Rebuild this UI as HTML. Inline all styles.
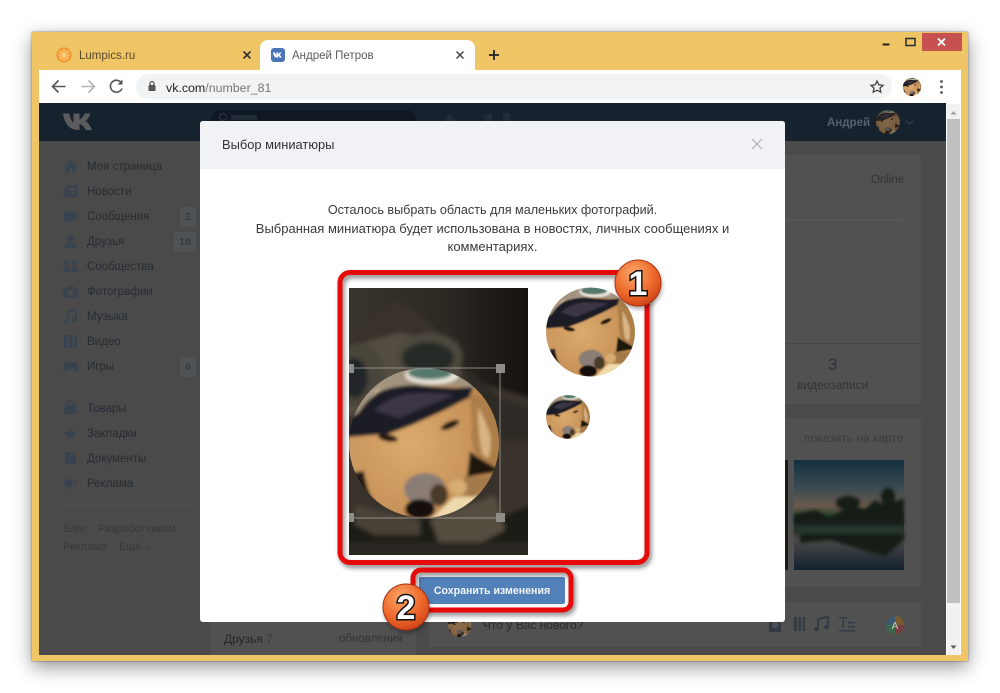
<!DOCTYPE html>
<html lang="ru"><head><meta charset="utf-8"><title>Выбор миниатюры</title>
<style>
html,body{margin:0;padding:0;width:1000px;height:693px;overflow:hidden;background:#fff}
body{font-family:"Liberation Sans","Noto Sans CJK SC",sans-serif;position:relative}
.a{position:absolute}
.t{position:absolute;white-space:nowrap;line-height:16px;transform:translateY(-7px)}
.s{font-size:11.5px;color:#272c33;left:87px}
.f{font-size:11px;color:#393939}
.b{position:absolute;background:#505356;color:#363b42;font-size:10.5px;font-weight:bold;text-align:center;height:20px;line-height:20px;border-radius:2px}
.m{font-size:13px;color:#3a3a3a;left:200px;width:585px;text-align:center}
svg{position:absolute;left:0;top:0}
</style></head><body>
<div class="a" style="left:32px;top:32px;width:936px;height:629px;background:#f0c566;box-shadow:0 6px 18px rgba(0,0,0,.42),0 0 2px rgba(0,0,0,.5)"></div>
<div class="a" style="left:922px;top:33px;width:40px;height:18px;background:#c75050"></div>
<div class="a" style="left:39px;top:70px;width:922px;height:585px;background:#fff"></div>
<div class="a" style="left:260px;top:40px;width:215px;height:31px;background:#fff;border-radius:8px 8px 0 0"></div>
<div class="a" style="left:136px;top:74px;width:756px;height:25px;background:#f1f3f4;border-radius:13px"></div>
<div class="a" style="left:39px;top:103px;width:907px;height:552px;background:#4a4a4a"></div>
<div class="a" style="left:39px;top:103px;width:907px;height:38px;background:#17222f"></div>
<div class="a" style="left:211px;top:110px;width:205px;height:30px;background:#0f1823;border-radius:10px"></div>
<div class="a" style="left:947px;top:104px;width:13px;height:551px;background:#f1f1f1"></div>
<div class="a" style="left:947px;top:119px;width:13px;height:484px;background:#c0c0c0"></div>
<div class="a" style="left:429px;top:155px;width:492px;height:249px;background:#515151;border-radius:2px"></div>
<div class="a" style="left:429px;top:220px;width:474px;height:1px;background:#5a5a5a"></div>
<div class="a" style="left:429px;top:343px;width:492px;height:1px;background:#484848"></div>
<div class="a" style="left:429px;top:418px;width:492px;height:169px;background:#515151;border-radius:2px"></div>
<div class="a" style="left:429px;top:602px;width:492px;height:45px;background:#515151;border-radius:2px"></div>
<div class="a" style="left:211px;top:600px;width:205px;height:55px;background:#515151"></div>
<div class="a" style="left:63px;top:505px;width:133px;height:1px;background:#505050"></div>
<div class="b" style="left:180px;top:207px;width:16px">2</div>
<div class="b" style="left:174px;top:232px;width:22px">18</div>
<div class="b" style="left:180px;top:357px;width:16px">6</div>

<div class="t" style="left:79px;top:55px;font-size:11.5px;color:#5a4a2a">Lumpics.ru</div>
<div class="t" style="left:292px;top:55px;font-size:11.5px;color:#5a5a5a">Андрей Петров</div>
<div class="t" style="left:166px;top:87px;font-size:12.4px;color:#202124">vk.com<span style="color:#777">/number_81</span></div>
<div class="t" style="left:827px;top:122px;font-size:11.5px;font-weight:bold;color:#56606c">Андрей</div>

<div class="t s" style="top:166px">Моя страница</div>
<div class="t s" style="top:191px">Новости</div>
<div class="t s" style="top:216px">Сообщения</div>
<div class="t s" style="top:241px">Друзья</div>
<div class="t s" style="top:266px">Сообщества</div>
<div class="t s" style="top:291px">Фотографии</div>
<div class="t s" style="top:316px">Музыка</div>
<div class="t s" style="top:341px">Видео</div>
<div class="t s" style="top:366px">Игры</div>
<div class="t s" style="top:408px">Товары</div>
<div class="t s" style="top:433px">Закладки</div>
<div class="t s" style="top:458px">Документы</div>
<div class="t s" style="top:483px">Реклама</div>
<div class="t f" style="left:63px;top:528px">Блог</div>
<div class="t f" style="left:98px;top:528px">Разработчикам</div>
<div class="t f" style="left:63px;top:546px">Реклама</div>
<div class="t f" style="left:119px;top:546px">Ещё</div>

<div class="t" style="left:871px;top:179px;font-size:11.5px;color:#333">Online</div>
<div class="t" style="left:828px;top:364px;font-size:17px;color:#2e3238">3</div>
<div class="t" style="left:797px;top:384px;font-size:12px;color:#333">видеозаписи</div>
<div class="t" style="left:804px;top:437px;font-size:12px;color:#3b3b3b">показать на карте</div>
<div class="t" style="left:224px;top:638px;font-size:12px;color:#262626">Друзья <span style="color:#3d3d3d">7</span></div>
<div class="t" style="left:339px;top:638px;font-size:11.5px;color:#333">обновления</div>

<svg width="1000" height="693" viewBox="0 0 1000 693" style="z-index:1">
<defs>
<filter id="bl" x="-10%" y="-10%" width="120%" height="120%"><feGaussianBlur stdDeviation="1.500"/></filter>
<filter id="bb" x="-10%" y="-10%" width="120%" height="120%"><feGaussianBlur stdDeviation="2.500"/></filter>
<filter id="sh" x="-20%" y="-20%" width="140%" height="140%"><feGaussianBlur stdDeviation="2.500"/></filter>
<clipPath id="c"><circle r="75"/></clipPath>
<clipPath id="pc"><rect x="349" y="288" width="179" height="267"/></clipPath>
<radialGradient id="orb" cx=".4" cy=".3" r=".8"><stop offset="0" stop-color="#f9a86a"/><stop offset=".55" stop-color="#ee6a2c"/><stop offset="1" stop-color="#c93a12"/></radialGradient>
<radialGradient id="fur" cx=".42" cy=".5" r=".6"><stop offset="0" stop-color="#dcaa6e"/><stop offset=".6" stop-color="#c8945a"/><stop offset="1" stop-color="#a87642"/></radialGradient>
<linearGradient id="land" x1="0" y1="0" x2="0" y2="1"><stop offset="0" stop-color="#12303f"/><stop offset=".25" stop-color="#3a4a52"/><stop offset=".42" stop-color="#6a5a4e"/><stop offset=".52" stop-color="#1d3a22"/><stop offset=".62" stop-color="#222e28"/><stop offset=".72" stop-color="#4d4a48"/><stop offset="1" stop-color="#12202e"/></linearGradient>
<linearGradient id="ph" x1="0" y1="0" x2="1" y2="0"><stop offset="0" stop-color="#39352c"/><stop offset=".55" stop-color="#2c2923"/><stop offset="1" stop-color="#14120f"/></linearGradient>
<g id="dog"><g clip-path="url(#c)"><g filter="url(#bl)">
<rect x="-90" y="-90" width="180" height="180" fill="url(#fur)"/>
<path d="M-90-90H90V-48L48-56-9-58-46-51-66-30-90-18Z" fill="#a39480"/>
<path d="M-62-32Q-55-45-46-54L-38-50Q-50-42-56-28Z" fill="#dcc9a4"/>
<ellipse cx="8" cy="-68" rx="27" ry="9.500" fill="#e6e2d6"/>
<ellipse cx="6" cy="-70" rx="22" ry="6.500" fill="#54786c"/>
<path d="M-90-18L-66-30Q-56-44-46-51Q-28-58-9-58Q12-56 31-55L49-56 46-46Q34-40 21-33L-12-18-36-9-90-5Z" fill="#1f1c25"/>
<path d="M-50-33Q-30-50-5-50Q15-50 30-48Q5-38-25-25Z" fill="#3a3644"/>
<path d="M46-50Q58-46 64-40Q72-26 74-10L76 25 53 14Q46 0 48-16Z" fill="#ac7e4a"/>
<path d="M54-36Q62-22 66-8 68 6 64 16L58 10Q54-8 54-36Z" fill="#d9b482"/>
<path d="M46 8L53 14 78 28 43 34Z" fill="#1a120c"/>
<path d="M-90-1L-74-1Q-62 10-62 27L-64 32-90 30Z" fill="#cc9a62"/>
<path d="M-90 32L-60 28Q-58 44-51 57L-36 72-60 90-90 60Z" fill="#281b12"/>
<path d="M41 34H70L51 54 30 50Z" fill="#a3794a"/>
<path d="M5 78L30 54 52 54 70 44 60 75 25 85Z" fill="#eed9ad"/>
<ellipse cx="34" cy="44" rx="9" ry="8" fill="#d6ac72"/>
<ellipse cx="1" cy="46" rx="21" ry="16" fill="#8a7d74"/>
<ellipse cx="15" cy="52" rx="9" ry="11" fill="#4c3a2c"/>
<ellipse cx="-4" cy="66" rx="15" ry="10" fill="#120e0c"/>
<ellipse cx="26" cy="-18" rx="10" ry="3.500" fill="#1c1410" transform="rotate(-24 26 -18)"/>
<ellipse cx="-36" cy="-5" rx="10" ry="3.500" fill="#1c1410" transform="rotate(10 -36 -5)"/>
</g></g></g>
</defs>

<!-- chrome -->
<circle cx="64" cy="55" r="7" fill="#f6a63c"/><circle cx="64" cy="55" r="7" fill="none" stroke="#ea8a2a"/><path d="M64 49V61M58 55H70M60 51L68 59M68 51L60 59" stroke="#fbd08a" stroke-width="1"/>
<path d="M243.500 51.500L250.500 58.500M250.500 51.500L243.500 58.500" stroke="#333" stroke-width="1.600"/>
<rect x="271" y="48" width="14" height="14" rx="3" fill="#4a76b8"/>
<path d="M273 52.500H275L276.500 55.500V52.500H278V54.500L279.500 52.500H281.500L279.800 54.800 282 57.500H279.800L278 55.500V57.500H276.500C274.500 57.500 273.500 55.500 273 52.500Z" fill="#fff"/>
<path d="M456.500 51.500L463.500 58.500M463.500 51.500L456.500 58.500" stroke="#444" stroke-width="1.500"/>
<path d="M494 50V60M489 55H499" stroke="#222" stroke-width="1.800"/>
<rect x="906" y="38.500" width="9" height="7" fill="none" stroke="#333" stroke-width="1.600"/>
<path d="M938 38.500L945 45.500M945 38.500L938 45.500" stroke="#fff" stroke-width="1.800"/>
<path d="M882.500 44.500H889.500" stroke="#222" stroke-width="2"/>
<path d="M52.500 86.500H65.500M58.500 80.500L52.500 86.500 58.500 92.500" fill="none" stroke="#555" stroke-width="1.600"/>
<path d="M81.500 86.500H94.500M88.500 80.500L94.500 86.500 88.500 92.500" fill="none" stroke="#b5b5b5" stroke-width="1.600"/>
<path d="M121.500 83A6 6 0 1 0 122 88.500" fill="none" stroke="#555" stroke-width="1.600"/><path d="M122.500 79.500V84.500H117.500Z" fill="#555"/>
<rect x="148.500" y="85" width="7" height="6" rx="1" fill="#555"/><path d="M150 85V83.500A2 2 0 0 1 154 83.500V85" fill="none" stroke="#555" stroke-width="1.200"/>
<path d="M877 81L878.800 84.800 883 85.300 880 88.100 880.800 92.200 877 90.200 873.200 92.200 874 88.100 871 85.300 875.200 84.800Z" fill="none" stroke="#444" stroke-width="1.300"/>
<g transform="translate(912 87) scale(.122)"><circle r="75" fill="#d8b27a"/><use href="#dog"/></g>
<circle cx="941.500" cy="81.500" r="1.400" fill="#555"/><circle cx="941.500" cy="87" r="1.400" fill="#555"/><circle cx="941.500" cy="92.500" r="1.400" fill="#555"/>
<path d="M950.500 114.500L953.500 111 956.500 114.500Z" fill="#a0a0a0"/>
<path d="M950.500 645.500L953.500 649 956.500 645.500Z" fill="#555"/>

<!-- vk header -->
<path d="M63 113.500H69.500C70 118 72 122 73.500 122.500V113.500H79.500V119.500C81.500 119 83.500 116 84.500 113.500H90.500C89.500 117 87.500 119.500 85.500 121 88 122.500 90.500 126 92 130H85.500C84.500 127 82 124.500 79.500 124V130H77C70 130 64.500 124 63 113.500Z" fill="#5a5c5e"/>
<circle cx="223" cy="117" r="3.500" fill="none" stroke="#2a3440" stroke-width="1.200"/>
<rect x="231" y="115" width="26" height="5" fill="#222c38"/>
<path d="M444 121L450 114 456 121Z M484 121V115L492 113V121Z M503 113H510V121H503Z" fill="#222c38"/>
<g transform="translate(888 122) scale(.16)"><circle r="75" fill="#2d2924"/><g opacity=".48"><use href="#dog"/></g></g>
<path d="M906 121L909.500 124 913 121" fill="none" stroke="#36414e" stroke-width="1.300"/>

<!-- sidebar icons -->
<g fill="#38434f">
<path d="M63.500 166.500L70.500 160 77.500 166.500H75.500V173H72V168.500H69V173H65.500V166.500Z"/>
<path d="M67 185H77V197H63.500V188.500H66V195H67ZM69 187.500V190.500H75V187.500ZM69 192V193.500H75V192Z" fill-rule="evenodd"/>
<ellipse cx="70" cy="216" rx="6.800" ry="5.200"/><path d="M65 219L64 223 69 220.500Z"/><path d="M76 212Q78.500 216 76 221" fill="none" stroke="#38434f" stroke-width="1"/>
<circle cx="70.500" cy="238.500" r="3.500"/><path d="M64.500 248C64.500 243.500 67 242.500 70.500 242.500S76.500 243.500 76.500 248Z"/>
<circle cx="66.500" cy="263" r="2.500"/><circle cx="74.500" cy="263" r="2.500"/><path d="M63 272C63 267.500 64 266.500 66.500 266.500S70 268 70 272ZM71 272C71 268 72 266.500 74.500 266.500S78 267.500 78 272Z"/>
<path d="M63.500 288H67L68 286H73L74 288H77.500V297.500H63.500ZM70.500 289.500A3.200 3.200 0 1 0 70.500 295.900 3.200 3.200 0 1 0 70.500 289.500Z" fill-rule="evenodd"/>
<path d="M67.500 322V312L76 310V320" fill="none" stroke="#38434f" stroke-width="2"/><ellipse cx="66" cy="322" rx="2.500" ry="2"/><ellipse cx="74.500" cy="320" rx="2.500" ry="2"/>
<path d="M64 335H77V348H64ZM67 335V348H68.500V335ZM72.500 335V348H74V335Z" fill-rule="evenodd"/>
<path d="M67 362H74C77 362 78 366 78 370 78 372.500 75.500 372.500 74 369.500H67C65.500 372.500 63 372.500 63 370 63 366 64 362 67 362Z"/>
<path d="M64.500 405H76.500V414H64.500Z"/><path d="M67.500 405V403.500A3 3 0 0 1 73.500 403.500V405" fill="none" stroke="#38434f" stroke-width="1.500"/>
<path d="M70.500 427L72.500 431.200 77 431.800 73.700 435 74.500 439.500 70.500 437.300 66.500 439.500 67.300 435 64 431.800 68.500 431.200Z"/>
<path d="M65 452H71.500V456H76V464H65ZM72.500 452L76 455H72.500Z"/>
<path d="M64.500 479.500H72.500L72.500 485.500H70V489H67.500V485.500H64.500Z"/><path d="M74.500 479H76V486H74.500Z"/>
</g>
<path d="M145 546L147.500 548.500 150 546" fill="none" stroke="#3f3f3f"/>

<!-- bg photos -->
<rect x="775" y="460" width="13" height="110" fill="#1f1a14"/>
<rect x="794" y="460" width="110" height="110" fill="url(#land)"/>
<g filter="url(#bl)"><path d="M794 515L815 510 830 518 850 506 865 509 875 500 885 505 904 498V525H794Z" fill="#141d14"/><path d="M794 527L904 527V534H794Z" fill="#26352a"/><path d="M800 543L830 540 850 546 870 552 885 556 904 540V534H800Z" fill="#141b18"/><ellipse cx="848" cy="503" rx="12" ry="7" fill="#161d17"/><ellipse cx="888" cy="497" rx="7" ry="9" fill="#161d17"/></g>

<!-- post box -->
<g transform="translate(460 625) scale(.16)"><circle r="75" fill="#2d2924"/><g opacity=".55"><use href="#dog"/></g></g>
<text x="483" y="629" font-size="12" fill="#2a2a2a" font-family="Liberation Sans,sans-serif">Что у Вас нового?</text>
<g fill="#323a43">
<path d="M769 618H781V632H769ZM775 622A3 3 0 1 0 775 628 3 3 0 1 0 775 622Z" fill-rule="evenodd"/>
<path d="M794 617H805V631H794ZM797 617V631H798.500V617ZM801 617V631H802.500V617Z" fill-rule="evenodd"/>
<path d="M818 629V619L828 617V627" fill="none" stroke="#323a43" stroke-width="1.800"/><ellipse cx="816.500" cy="629" rx="2.500" ry="2"/><ellipse cx="826.500" cy="627" rx="2.500" ry="2"/>
<path d="M839 617H847V618.500H844V628H842.500V618.500H839ZM848 622H855V623.500H848ZM848 626H855V627.500H848ZM839 630H855V631.500H839Z"/>
</g>
<circle cx="895" cy="625" r="9" fill="#3f5a6a"/><path d="M895 616A9 9 0 0 1 904 625H895Z" fill="#7a5a30"/><path d="M895 625H904A9 9 0 0 1 895 634Z" fill="#7a3c3c"/><path d="M895 625V634A9 9 0 0 1 886 625Z" fill="#3a6a4a"/>
<text x="895" y="629" text-anchor="middle" font-size="10" fill="#ccc" font-family="Liberation Sans,sans-serif">A</text>

<!-- modal -->
<rect x="200" y="121" width="585" height="501" rx="3" fill="#fff"/>
<path d="M200 169V124A3 3 0 0 1 203 121H782A3 3 0 0 1 785 124V169Z" fill="#f0f2f5"/>
<path d="M752 139L762 149M762 139L752 149" stroke="#b7bdc6" stroke-width="1.500"/>

<!-- crop photo -->
<rect x="349" y="288" width="179" height="267" fill="url(#ph)"/>
<g clip-path="url(#pc)">
<g filter="url(#bb)">
<path d="M349 345L365 322 395 300 425 318 445 340 470 380 540 400 540 570H340Z" fill="#37322a"/>
<path d="M340 350L372 340 400 333 440 340 462 375 340 420Z" fill="#534d42"/>
<ellipse cx="430" cy="357" rx="33" ry="24" fill="#4e483e"/>
<ellipse cx="428" cy="358" rx="26" ry="16" fill="#282a27"/>
<ellipse cx="360" cy="375" rx="24" ry="32" fill="#4a443a"/>
<ellipse cx="354" cy="378" rx="14" ry="20" fill="#23262a"/>
<path d="M470 370L500 400 540 410V440L470 440Z" fill="#2e2a25"/>
<path d="M340 518H500L540 500V570H340Z" fill="#1e1a17"/>
<path d="M355 505L420 520 420 535 375 535 355 525Z" fill="#4a4338"/>
<path d="M430 520L495 495 505 530 470 548 440 545Z" fill="#544d41"/>
<path d="M340 542H540V570H340Z" fill="#2a2622"/>
</g>
</g>
<use href="#dog" transform="translate(424 443)"/>
<path d="M349 368H500V518H349" fill="none" stroke="#a5a29a" stroke-width="1" opacity=".8"/>
<path d="M500 368V518" stroke="#8b8981" stroke-width="1"/>
<rect x="496" y="364" width="9" height="9" fill="#8e8c86"/><rect x="496" y="513" width="9" height="9" fill="#8e8c86"/>
<rect x="349" y="364" width="5" height="9" fill="#8e8c86"/><rect x="349" y="513" width="5" height="9" fill="#8e8c86"/>
<use href="#dog" transform="translate(590.500 332) scale(.593)"/>
<use href="#dog" transform="translate(568 417) scale(.293)"/>

<!-- button -->
<rect x="419" y="577" width="146" height="27" rx="2" fill="#5181b8"/>
<text x="492" y="594" text-anchor="middle" font-size="10.6" font-weight="bold" fill="#f2f5fa" font-family="Liberation Sans,sans-serif">Сохранить изменения</text>

<!-- annotations -->
<g filter="url(#sh)" opacity=".55" transform="translate(2 3)" fill="none" stroke="#222" stroke-width="5"><rect x="340" y="272.500" width="307" height="290" rx="10"/><rect x="413" y="570" width="158" height="40" rx="8"/></g>
<rect x="340" y="272.500" width="307" height="290" rx="10" fill="none" stroke="#e60a0a" stroke-width="5"/>
<rect x="413" y="570" width="158" height="40" rx="8" fill="none" stroke="#e60a0a" stroke-width="5"/>
<g font-family="Liberation Sans,sans-serif" font-weight="bold" font-size="34" text-anchor="middle">
<circle cx="639" cy="286" r="23" fill="#000" opacity=".35" filter="url(#sh)"/>
<circle cx="638" cy="283" r="23" fill="url(#orb)" stroke="#a93412" stroke-width="1"/>
<text x="638" y="295" fill="#fff" stroke="#111" stroke-width="3" paint-order="stroke">1</text>
<circle cx="407" cy="610" r="23" fill="#000" opacity=".35" filter="url(#sh)"/>
<circle cx="406" cy="607" r="23" fill="url(#orb)" stroke="#a93412" stroke-width="1"/>
<text x="406" y="619" fill="#fff" stroke="#111" stroke-width="3" paint-order="stroke">2</text>
</g>
</svg>

<div class="t" style="left:222px;top:144px;font-size:12.9px;color:#333;z-index:2">Выбор миниатюры</div>
<div class="t m" style="top:209px;z-index:2;font-size:12.6px">Осталось выбрать область для маленьких фотографий.</div>
<div class="t m" style="top:228px;z-index:2">Выбранная миниатюра будет использована в новостях, личных сообщениях и</div>
<div class="t m" style="top:246px;z-index:2">комментариях.</div>
</body></html>
